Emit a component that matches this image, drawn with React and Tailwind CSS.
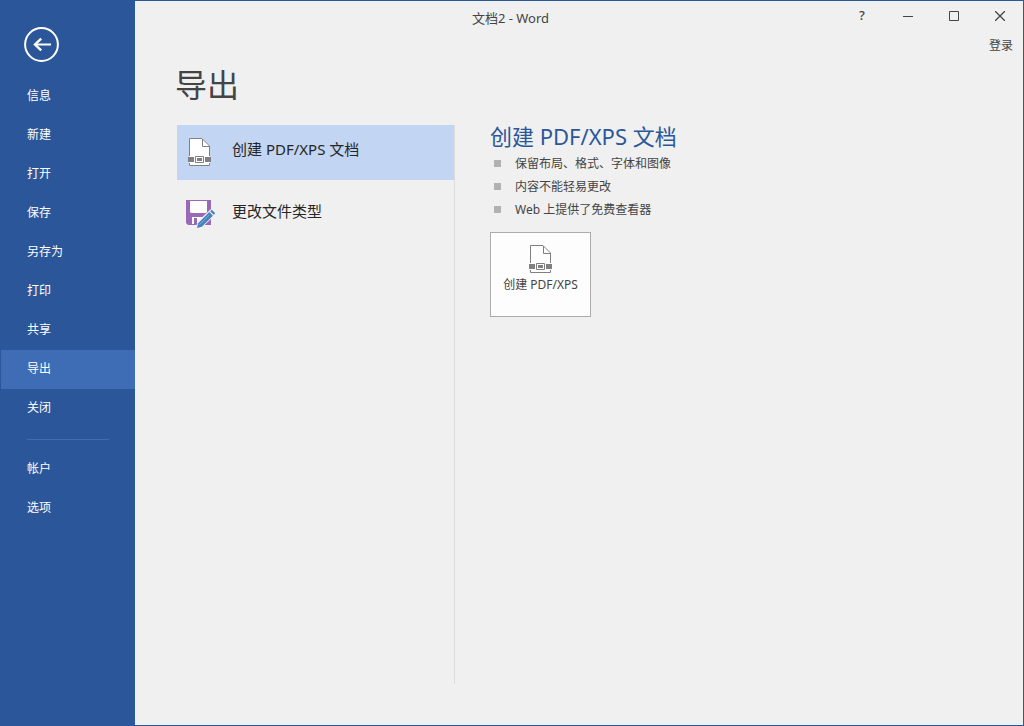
import { useState } from 'react';

const mainItems = ['信息', '新建', '打开', '保存', '另存为', '打印', '共享', '导出', '关闭'];
const footerItems = ['帐户', '选项'];
const features = ['保留布局、格式、字体和图像', '内容不能轻易更改', 'Web 上提供了免费查看器'];

function BackIcon() {
  return (
    <svg width="35" height="35" viewBox="0 0 35 35" fill="none" stroke="#fff" aria-hidden="true">
      <circle cx="17.5" cy="17.5" r="16.4" strokeWidth="2" />
      <path d="M27 17.5H11" strokeWidth="2" />
      <path d="M17.2 11.6L11 17.5l6.2 5.9" strokeWidth="2.4" />
    </svg>
  );
}

function PdfIcon() {
  return (
    <svg width="24" height="28" viewBox="0 0 24 28" aria-hidden="true">
      <path d="M1 0h13l8 8v20H1z" fill="#fff" />
      <path d="M1.5 18V.5H14L21.5 8v10M1.5 25v2.5h20V25" fill="none" stroke="#808080" />
      <path d="M14.5 1v7.5H21" fill="none" stroke="#808080" />
      <path d="M0 19h6v5H0zM17 19h6v5h-6z" fill="#808080" />
      <path d="M7.5 18.5h8v6h-8z" fill="#fff" stroke="#808080" />
      <path d="M9 20h5v3H9z" fill="#808080" />
    </svg>
  );
}

function SaveAsIcon() {
  return (
    <svg width="29" height="28" viewBox="0 0 29 28" aria-hidden="true">
      <path d="M0 0h25v25H2l-2-2z" fill="#9b68b8" />
      <path d="M4 1h17v11l-1 1H5l-1-1z" fill="#fff" />
      <path d="M6 17h12v7H6z" fill="#fff" />
      <path d="M8 18h3v6H8z" fill="#9b68b8" />
      <path d="M10 28l1.5-6.5L25 9l4 3v3L16 27.5z" fill="#f0f0f0" />
      <path d="M11 28l1.2-4.8L23.3 12.1l3.6 3.6L15.8 26.8z" fill="#4682be" />
      <path d="M24.2 11.2l1.6-1.4 3.4 3.4-1.5 1.6z" fill="#4682be" />
      <path d="M13.4 24.8l10-10" stroke="#7faad6" />
    </svg>
  );
}

function NavItem({ label, active, onClick }) {
  return (
    <button
      onClick={onClick}
      className={`block h-[39px] w-full pb-0.5 pl-[26px] text-left ${active ? 'bg-[#3e6db5]' : ''}`}
    >
      {label}
    </button>
  );
}

export default function App() {
  const [active, setActive] = useState('导出');

  return (
    <div className="flex min-h-screen bg-[#f0f0f0] text-xs text-[#444] font-['Noto_Sans','Noto_Sans_CJK_SC',sans-serif]">
      <nav className="w-[135px] shrink-0 bg-[#2b579a] pl-px text-white">
        <button aria-label="返回" className="mt-[27px] mb-[15px] ml-[23px] block">
          <BackIcon />
        </button>
        {mainItems.map(item => (
          <NavItem key={item} label={item} active={item === active} onClick={() => setActive(item)} />
        ))}
        <hr className="mt-[11px] mr-[26px] mb-[10px] ml-[26px] border-[#3e6db5]" />
        {footerItems.map(item => (
          <NavItem key={item} label={item} active={item === active} onClick={() => setActive(item)} />
        ))}
      </nav>

      <div className="flex min-w-0 flex-1 flex-col border-t border-r border-b border-[#2b579a]">
        <header className="grid">
          <p className="col-start-1 row-start-1 pt-[7px] pr-[137px] text-center text-[13px] leading-5">文档2 - Word</p>
          <div className="col-start-1 row-start-1 flex h-[30px] justify-self-end">
            <button aria-label="帮助" className="w-[46px] text-[13px] font-medium">?</button>
            <button aria-label="最小化" className="flex w-[46px] items-center justify-center">
              <svg width="10" height="10" viewBox="0 0 10 10" stroke="#444"><path d="M0 5.5h10" /></svg>
            </button>
            <button aria-label="最大化" className="flex w-[46px] items-center justify-center">
              <svg width="10" height="10" viewBox="0 0 10 10" fill="none" stroke="#444"><path d="M.5.5h9v9h-9z" /></svg>
            </button>
            <button aria-label="关闭窗口" className="flex w-[46px] items-center justify-center">
              <svg width="10" height="10" viewBox="0 0 10 10" stroke="#444" strokeWidth="1.3"><path d="M0 0l10 10M10 0L0 10" /></svg>
            </button>
          </div>
        </header>
        <div className="flex h-[30px] items-center justify-end pr-[10px]">
          <button>登录</button>
        </div>

        <main className="flex flex-1 flex-col pl-10 pb-[41px]">
          <h1 className="mb-4 text-[32px] leading-[48px]">导出</h1>
          <div className="flex flex-1">
            <div className="w-[280px] shrink-0 border-r border-[#dcdcdc] pl-0.5 text-[15px] text-[#262626]">
              <button className="flex h-[55px] w-full items-center bg-[#c2d5f2] pb-px pl-[11px] text-left">
                <PdfIcon />
                <span className="ml-5 pb-[6px]">创建 PDF/XPS 文档</span>
              </button>
              <button className="mt-[7px] flex h-[55px] w-full items-center pb-px pl-[9px] text-left">
                <SaveAsIcon />
                <span className="ml-[17px] pb-[6px]">更改文件类型</span>
              </button>
            </div>

            <section className="pl-[35px]">
              <h2 className="pb-1 text-[22px] leading-[23px] text-[#2b579a]">创建 PDF/XPS 文档</h2>
              <ul>
                {features.map(text => (
                  <li key={text} className="flex h-[23px] items-center pl-1">
                    <span className="mr-[14px] size-[7px] bg-[#b1b1b1]" />
                    {text}
                  </li>
                ))}
              </ul>
              <button className="mt-[11px] flex h-[85px] w-[101px] flex-col items-center border border-[#ababab] bg-[#fdfdfd] pt-3">
                <PdfIcon />
                <span className="whitespace-nowrap leading-6">创建 PDF/XPS</span>
              </button>
            </section>
          </div>
        </main>
      </div>
    </div>
  );
}
